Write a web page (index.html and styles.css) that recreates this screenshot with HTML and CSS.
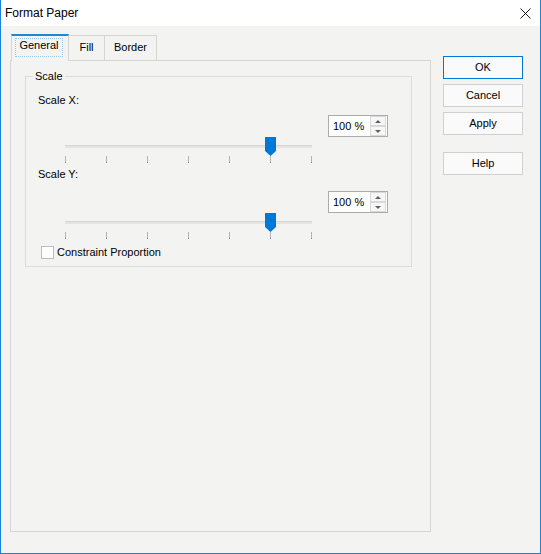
FILE: index.html
```html
<!DOCTYPE html>
<html>
<head>
<meta charset="utf-8">
<title>Format Paper</title>
<link rel="stylesheet" href="styles.css">
</head>
<body>
<div class="window">
  <div class="titlebar">
    <span class="title">Format Paper</span>
    <svg class="close" width="11" height="11" viewBox="0 0 11 11"><path d="M0.5 0.5 L10.5 10.5 M10.5 0.5 L0.5 10.5" stroke="#1a1a1a" stroke-width="1" fill="none"/></svg>
  </div>
  <div class="main">
    <div class="left">
      <div class="tabs">
        <div class="tab sel"><span class="focus">General</span></div>
        <div class="tab fill">Fill</div>
        <div class="tab border">Border</div>
      </div>
      <div class="panel">
        <div class="group">
          <span class="legend">Scale</span>
          <div class="lbl">Scale X:</div>
          <div class="spinrow first">
            <div class="spin">
              <span class="val">100 %</span>
              <div class="spinbtns">
                <div class="sb up"><span class="tri-up"></span></div>
                <div class="sb down"><span class="tri-down"></span></div>
              </div>
            </div>
          </div>
          <div class="slider">
            <div class="track"></div>
            <svg class="thumb" width="11" height="19" viewBox="0 0 11 19"><polygon points="0,0 11,0 11,14 5.5,19 0,14" fill="#0078d7"/></svg>
            <div class="ticks"><i></i><i></i><i></i><i></i><i></i><i></i><i></i></div>
          </div>
          <div class="lbl second">Scale Y:</div>
          <div class="spinrow second">
            <div class="spin">
              <span class="val">100 %</span>
              <div class="spinbtns">
                <div class="sb up"><span class="tri-up"></span></div>
                <div class="sb down"><span class="tri-down"></span></div>
              </div>
            </div>
          </div>
          <div class="slider">
            <div class="track"></div>
            <svg class="thumb" width="11" height="19" viewBox="0 0 11 19"><polygon points="0,0 11,0 11,14 5.5,19 0,14" fill="#0078d7"/></svg>
            <div class="ticks"><i></i><i></i><i></i><i></i><i></i><i></i><i></i></div>
          </div>
          <label class="check"><span class="box"></span><span>Constraint Proportion</span></label>
        </div>
      </div>
    </div>
    <div class="buttons">
      <div class="btn default">OK</div>
      <div class="btn">Cancel</div>
      <div class="btn">Apply</div>
      <div class="btn help">Help</div>
    </div>
  </div>
</div>
</body>
</html>
```
FILE: styles.css
```css
html, body {
  margin: 0;
  padding: 0;
}
body {
  font-family: "Liberation Sans", Arial, sans-serif;
  font-size: 11px;
  line-height: 13px;
  color: #000;
  background: #f3f4f1;
}
.window {
  width: 541px;
  height: 554px;
  box-sizing: border-box;
  border: 1px solid #1883d7;
  border-top: none;
  background: #f3f4f1;
  display: flex;
  flex-direction: column;
}
.titlebar {
  height: 26px;
  flex: none;
  background: #fff;
  display: flex;
  align-items: center;
  justify-content: space-between;
  padding: 0 9px 0 4px;
}
.title {
  font-size: 12px;
  line-height: 14px;
  margin-top: -1px;
}
.close {
  display: block;
  margin-top: 1px;
}
.main {
  display: flex;
  padding: 8px 0 0 9px;
}
.left {
  width: 421px;
  display: flex;
  flex-direction: column;
}
.tabs {
  display: flex;
  align-items: flex-end;
  height: 27px;
  margin-left: 1px;
  margin-bottom: -1px;
  position: relative;
  z-index: 1;
}
.tab {
  box-sizing: border-box;
  border: 1px solid #d5d5d5;
  border-bottom: none;
  background: #f3f4f1;
  text-align: center;
}
.tab.fill,
.tab.border {
  height: 25px;
  margin-bottom: 1px;
  margin-left: -1px;
  padding-top: 5px;
}
.tab.fill { width: 37px; }
.tab.border { width: 53px; }
.tab.sel {
  width: 58px;
  height: 27px;
  border-top: 2px solid #1e88d8;
  position: relative;
  z-index: 2;
}
.focus {
  display: block;
  box-sizing: border-box;
  width: 48px;
  height: 19px;
  margin: 2px 0 0 3px;
  border: 1px dotted #9cc6ea;
  line-height: 13px;
  padding-top: 0;
}
.panel {
  box-sizing: border-box;
  height: 472px;
  border: 1px solid #d5d5d5;
}
.group {
  position: relative;
  box-sizing: border-box;
  width: 387px;
  height: 191px;
  margin: 15px 0 0 14px;
  border: 1px solid #dcdcdc;
  padding: 17px 23px 0 12px;
}
.legend {
  position: absolute;
  top: -7px;
  left: 7px;
  padding: 0 2px;
  background: #f3f4f1;
}
.lbl.second {
  margin-top: 3px;
}
.spinrow {
  display: flex;
  justify-content: flex-end;
  margin-top: 8px;
}
.spinrow.second {
  margin-top: 10px;
}
.spin {
  box-sizing: border-box;
  width: 60px;
  height: 22px;
  border: 1px solid #acacac;
  background: #fff;
  display: flex;
  align-items: center;
  justify-content: space-between;
  padding: 0 1px 0 4px;
}
.spinbtns {
  display: flex;
  flex-direction: column;
  width: 16px;
}
.sb {
  box-sizing: border-box;
  height: 10px;
  border: 1px solid #d9d9d9;
  background: #f7f7f7;
  display: flex;
  align-items: center;
  justify-content: center;
}
.tri-up,
.tri-down {
  width: 0;
  height: 0;
  border-left: 3px solid transparent;
  border-right: 3px solid transparent;
}
.tri-up { border-bottom: 3px solid #606060; }
.tri-down { border-top: 3px solid #606060; }
.slider {
  position: relative;
  height: 28px;
  margin-left: 27px;
  width: 247px;
}
.track {
  position: absolute;
  top: 8px;
  left: 0;
  width: 247px;
  height: 3px;
  background: #e4e4e4;
  border-top: 1px solid #d6d6d6;
  box-sizing: border-box;
}
.thumb {
  position: absolute;
  top: 0;
  left: 200px;
  display: block;
}
.ticks {
  position: absolute;
  top: 19px;
  left: 0;
  width: 247px;
  display: flex;
  justify-content: space-between;
}
.ticks i {
  display: block;
  width: 1px;
  height: 7px;
  background: linear-gradient(#b4b4b4 0, #b4b4b4 6px, #7d7dc4 6px);
}
.check {
  display: flex;
  align-items: center;
  margin: 5px 0 0 3px;
  height: 13px;
}
.box {
  box-sizing: border-box;
  width: 13px;
  height: 13px;
  border: 1px solid #bcbcbc;
  background: #fff;
  margin-right: 3px;
}
.buttons {
  margin: 22px 0 0 12px;
  display: flex;
  flex-direction: column;
  gap: 5px;
}
.btn {
  box-sizing: border-box;
  width: 80px;
  height: 23px;
  border: 1px solid #d0d0d0;
  background: #fafafa;
  display: flex;
  align-items: center;
  justify-content: center;
}
.btn.default {
  border-color: #0078d7;
}
.btn.help {
  margin-top: 12px;
}
```
